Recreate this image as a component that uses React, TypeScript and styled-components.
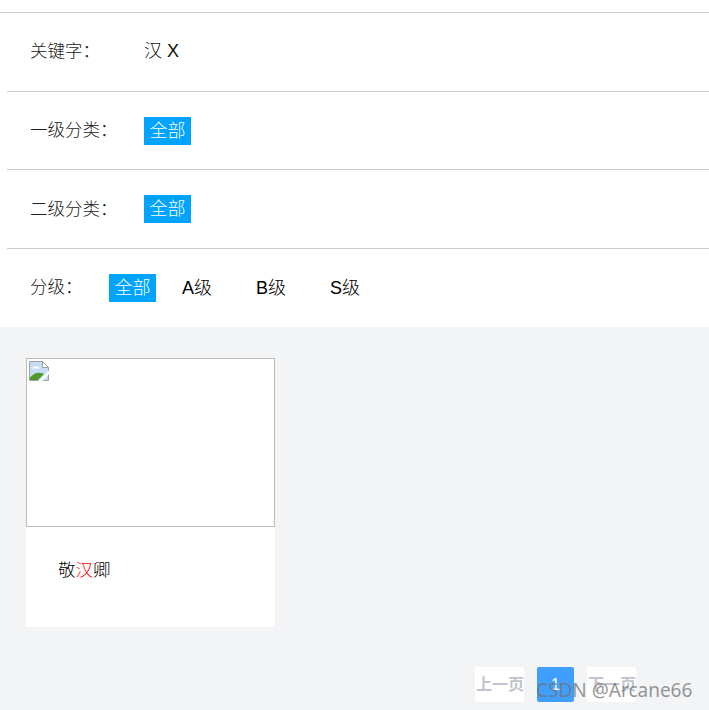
import React from 'react';
import styled, {createGlobalStyle} from 'styled-components';

const GlobalStyle = createGlobalStyle`
  html, body {
    margin: 0;
    padding: 0;
    background: #fff;
    font-family: "Liberation Sans", "Noto Sans CJK SC", sans-serif;
  }
`;

const Page = styled('div')`
  position: relative;
  width: 709px;
  height: 710px;
  overflow: hidden;
  background-color: #f3f4f6;
`;

const FilterPanel = styled('div')`
  background-color: #fff;
  height: 327px;
  padding-top: 12px;
  box-sizing: border-box;
`;

const FilterRow = styled('div')<{$first?: boolean; $height: number}>`
  display: flex;
  align-items: center;
  box-sizing: border-box;
  height: ${(p) => p.$height}px;
  margin-left: ${(p) => (p.$first ? 0 : 7)}px;
  padding-left: ${(p) => (p.$first ? 30 : 23)}px;
  border-top: 1px solid #ccc;
  font-size: 18px;
`;

const RowLabel = styled('span')<{$width: number; $lift?: number}>`
  width: ${(p) => p.$width}px;
  margin-top: ${(p) => -(p.$lift ?? 5)}px;
  color: #222;
  font-size: 17.5px;
  font-weight: 300;
  flex-shrink: 0;
`;

const Keyword = styled('span')`
  margin-top: -6px;
  margin-left: -1px;
  color: #111;
  font-weight: 300;
`;

const Tag = styled('span')<{$active?: boolean}>`
  display: inline-block;
  width: ${(p) => (p.$active ? '47px' : 'auto')};
  height: 28px;
  line-height: 28px;
  text-align: center;
  font-weight: 300;
  color: ${(p) => (p.$active ? '#fff' : '#000')};
  background-color: ${(p) => (p.$active ? '#00a4ff' : 'transparent')};
`;

const GradeTags = styled('div')`
  display: flex;
  align-items: center;
  gap: 4px;
`;

const GradeTag = styled(Tag)`
  width: 74px;
  margin-right: -4px;
`;

const Results = styled('div')`
  padding: 31px 0 0 26px;
`;

const Card = styled('div')`
  width: 249px;
  height: 269px;
  background-color: #fff;
`;

const Cover = styled('div')`
  box-sizing: border-box;
  width: 249px;
  height: 169px;
  border: 1px solid #bbb;
  padding: 2px;
`;

const CardTitle = styled('div')`
  padding: 30px 0 0 32px;
  font-size: 17.5px;
  font-weight: 300;
  line-height: 26px;
  color: #000;

  em {
    font-style: normal;
    color: #ff0000;
  }
`;

const Pager = styled('div')`
  display: flex;
  justify-content: flex-end;
  align-items: center;
  gap: 13px;
  margin-top: 40px;
  padding-right: 73px;
`;

const PageButton = styled('span')<{$current?: boolean}>`
  display: block;
  box-sizing: border-box;
  width: ${(p) => (p.$current ? 37 : 49)}px;
  height: 35px;
  line-height: 35px;
  padding-left: ${(p) => (p.$current ? 0 : 1)}px;
  text-align: center;
  border-radius: 2px;
  font-size: 16px;
  font-weight: ${(p) => (p.$current ? 400 : 700)};
  color: ${(p) => (p.$current ? '#fff' : '#c0c4cc')};
  background-color: ${(p) => (p.$current ? '#409eff' : '#fff')};
`;

const Watermark = styled('span')`
  position: absolute;
  left: 536px;
  top: 677px;
  font-family: "Noto Sans", sans-serif;
  font-size: 19px;
  line-height: 26px;
  color: rgba(115, 115, 115, 0.75);
`;

const BrokenImage = () => (
  <svg width="20" height="20" viewBox="0 0 20 20">
    <path d="M0.5 0.5H13.5L19.5 6.5V19.5H0.5Z" fill="#c9dcf5" stroke="#a0a0a0" />
    <path d="M13.5 0.5V6.5H19.5Z" fill="#fff" stroke="#a0a0a0" />
    <path d="M3 8C4 5 8 4 11 7.5H3Z" fill="#fff" />
    <path d="M1 19V16.5C5 11.5 10 10.5 15 13L9 19Z" fill="#4f9a2a" />
    <path d="M9 20L20 9.5V13L13.5 20Z" fill="#fff" />
  </svg>
);

const grades = ['A级', 'B级', 'S级'];

const App = () => {
  return (
    <Page>
      <GlobalStyle />
      <FilterPanel>
        <FilterRow $first $height={79}>
          <RowLabel $width={115}>关键字：</RowLabel>
          <Keyword>汉 X</Keyword>
        </FilterRow>
        <FilterRow $height={78}>
          <RowLabel $width={114}>一级分类：</RowLabel>
          <Tag $active>全部</Tag>
        </FilterRow>
        <FilterRow $height={79}>
          <RowLabel $width={114} $lift={3}>二级分类：</RowLabel>
          <Tag $active>全部</Tag>
        </FilterRow>
        <FilterRow $height={79}>
          <RowLabel $width={79}>分级：</RowLabel>
          <GradeTags>
            <Tag $active>全部</Tag>
            {grades.map((grade) => (
              <GradeTag key={grade}>{grade}</GradeTag>
            ))}
          </GradeTags>
        </FilterRow>
      </FilterPanel>
      <Results>
        <Card>
          <Cover>
            <BrokenImage />
          </Cover>
          <CardTitle>
            敬<em>汉</em>卿
          </CardTitle>
        </Card>
      </Results>
      <Pager>
        <PageButton>上一页</PageButton>
        <PageButton $current>1</PageButton>
        <PageButton>下一页</PageButton>
      </Pager>
      <Watermark>CSDN @Arcane66</Watermark>
    </Page>
  );
};

export default App;
